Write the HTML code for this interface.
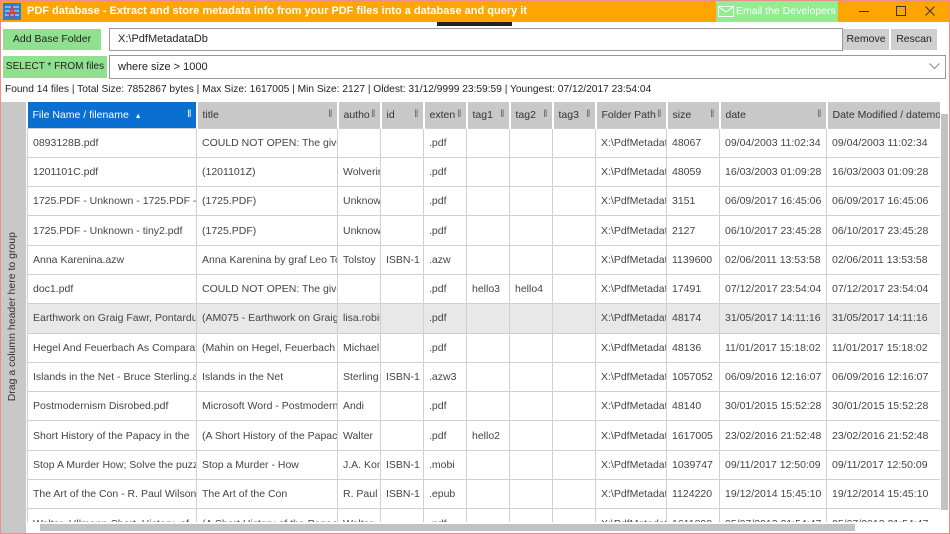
<!DOCTYPE html>
<html><head><style>
*{box-sizing:border-box;margin:0;padding:0}
html,body{width:950px;height:534px;overflow:hidden}
body{background:#fff;font-family:"Liberation Sans",sans-serif;font-size:10.5px;color:#222;position:relative}
.abs{position:absolute;white-space:nowrap}
#frame{left:0;top:0;width:950px;height:534px;border:1px solid #e89090;z-index:10;pointer-events:none}
#tb{left:0;top:0;width:950px;height:22px;background:#ffa500;color:#fff;font-weight:bold;font-size:11px;line-height:22px}
.btn{background:#8fe08f;color:#222;text-align:center;font-size:10.5px}
.gbtn{background:#cfcfcf;text-align:center;font-size:10.5px;line-height:21px}
.box{border:1px solid #999;background:#fff;font-size:11px;padding-left:8px}
table{border-collapse:collapse;table-layout:fixed;position:absolute;left:27px;top:102px;width:913px}
td{height:29.3px;border:1px solid #d0d0d0;padding:0 5px;white-space:nowrap;overflow:hidden;color:#444;font-size:10.5px}
th{height:26px;background:#c8c8c8;border-right:2px solid #fff;font-weight:normal;text-align:left;padding:0 5px;white-space:nowrap;overflow:hidden;color:#333;position:relative;font-size:10.5px}
th span.g{position:absolute;right:4px;top:6px;color:#666}
th.s{background:#0a6fd0;color:#fff}
th.s span.g{color:#fff}
tr.sel td{background:#e8e8e8}
</style></head><body>
<div id="tb" class="abs">
<svg class="abs" style="left:3px;top:3px" width="18" height="17"><rect width="18" height="17" fill="#2a7fd4"/><path d="M2 4h14M2 8h14M2 12h14" stroke="#8fd0ff" stroke-width="1.5"/><path d="M6 15 L9 3 L12 15 M4 11 L14 9" stroke="#e33" stroke-width="1.6" fill="none"/></svg>
<span class="abs" style="left:27px;top:0">PDF database - Extract and store metadata info from your PDF files into a database and query it</span>
<div class="abs" style="left:716px;top:0;width:122px;height:22px;background:#90ee90;font-weight:normal;font-size:10.5px;padding-left:20px;overflow:hidden">Email the Developers</div>
<svg class="abs" style="left:718px;top:6px" width="16" height="11"><rect x="0.5" y="0.5" width="15" height="10" fill="none" stroke="#fff"/><path d="M1 1l7 5 7-5" stroke="#fff" fill="none"/></svg>
<div class="abs" style="left:859px;top:11px;width:10px;height:1px;background:#333"></div>
<div class="abs" style="left:896px;top:6px;width:10px;height:10px;border:1px solid #333"></div>
<svg class="abs" style="left:925px;top:6px" width="10" height="10"><path d="M0.5 0.5l9 9M9.5 0.5l-9 9" stroke="#333"/></svg>
</div>
<div class="abs" style="left:437px;top:22px;width:75px;height:4px;background:#222"></div>
<div class="abs btn" style="left:3px;top:29px;width:98px;height:21px;line-height:21px">Add Base Folder</div>
<div class="abs box" style="left:109px;top:28px;width:734px;height:23px;line-height:21px">X:\PdfMetadataDb</div>
<div class="abs gbtn" style="left:843px;top:29px;width:46px;height:21px">Remove</div>
<div class="abs gbtn" style="left:891px;top:29px;width:46px;height:21px">Rescan</div>
<div class="abs btn" style="left:3px;top:56px;width:104px;height:22px;line-height:22px;font-size:10px">SELECT * FROM files</div>
<div class="abs box" style="left:109px;top:55px;width:837px;height:24px;line-height:22px">where size &gt; 1000</div>
<svg class="abs" style="left:929px;top:63px" width="11" height="7"><path d="M0.5 0.5l5 5 5-5" stroke="#888" fill="none"/></svg>
<div class="abs" style="left:5px;top:84px;font-size:10.2px;color:#222">Found 14 files | Total Size: 7852867 bytes | Max Size: 1617005 | Min Size: 2127 | Oldest: 31/12/9999 23:59:59 | Youngest: 07/12/2017 23:54:04</div>
<div class="abs" style="left:0;top:102px;width:26px;height:432px;background:#c8c8c8"></div>
<div class="abs" style="left:6px;top:232px;writing-mode:vertical-rl;transform:rotate(180deg);color:#333;font-size:10.5px">Drag a column header here to group</div>
<table>
<colgroup><col style="width:169px"><col style="width:141px"><col style="width:43px"><col style="width:43px"><col style="width:43px"><col style="width:43px"><col style="width:43px"><col style="width:43px"><col style="width:71px"><col style="width:53px"><col style="width:107px"><col style="width:114px"></colgroup>
<tr><th class="s">File Name / filename &nbsp;<span style="font-size:7px">▲</span><span class="g">‖</span></th><th>title<span class="g">‖</span></th><th>autho<span class="g">‖</span></th><th>id<span class="g">‖</span></th><th>exten<span class="g">‖</span></th><th>tag1<span class="g">‖</span></th><th>tag2<span class="g">‖</span></th><th>tag3<span class="g">‖</span></th><th>Folder Path<span class="g">‖</span></th><th>size<span class="g">‖</span></th><th>date<span class="g">‖</span></th><th style="border-right:0">Date Modified / datemod</th></tr>
<tr><td>0893128B.pdf</td><td>COULD NOT OPEN: The given</td><td></td><td></td><td>.pdf</td><td></td><td></td><td></td><td>X:\PdfMetadata</td><td>48067</td><td>09/04/2003 11:02:34</td><td>09/04/2003 11:02:34</td></tr>
<tr><td>1201101C.pdf</td><td>(1201101Z)</td><td>Wolverine</td><td></td><td>.pdf</td><td></td><td></td><td></td><td>X:\PdfMetadata</td><td>48059</td><td>16/03/2003 01:09:28</td><td>16/03/2003 01:09:28</td></tr>
<tr><td>1725.PDF - Unknown - 1725.PDF - </td><td>(1725.PDF)</td><td>Unknown</td><td></td><td>.pdf</td><td></td><td></td><td></td><td>X:\PdfMetadata</td><td>3151</td><td>06/09/2017 16:45:06</td><td>06/09/2017 16:45:06</td></tr>
<tr><td>1725.PDF - Unknown - tiny2.pdf</td><td>(1725.PDF)</td><td>Unknown</td><td></td><td>.pdf</td><td></td><td></td><td></td><td>X:\PdfMetadata</td><td>2127</td><td>06/10/2017 23:45:28</td><td>06/10/2017 23:45:28</td></tr>
<tr><td>Anna Karenina.azw</td><td>Anna Karenina by graf Leo Tolstoy</td><td>Tolstoy</td><td>ISBN-1</td><td>.azw</td><td></td><td></td><td></td><td>X:\PdfMetadata</td><td>1139600</td><td>02/06/2011 13:53:58</td><td>02/06/2011 13:53:58</td></tr>
<tr><td>doc1.pdf</td><td>COULD NOT OPEN: The given</td><td></td><td></td><td>.pdf</td><td>hello3</td><td>hello4</td><td></td><td>X:\PdfMetadata</td><td>17491</td><td>07/12/2017 23:54:04</td><td>07/12/2017 23:54:04</td></tr>
<tr class="sel"><td>Earthwork on Graig Fawr, Pontardulais</td><td>(AM075 - Earthwork on Graig</td><td>lisa.robinson</td><td></td><td>.pdf</td><td></td><td></td><td></td><td>X:\PdfMetadata</td><td>48174</td><td>31/05/2017 14:11:16</td><td>31/05/2017 14:11:16</td></tr>
<tr><td>Hegel And Feuerbach As Comparative</td><td>(Mahin on Hegel, Feuerbach</td><td>Michael</td><td></td><td>.pdf</td><td></td><td></td><td></td><td>X:\PdfMetadata</td><td>48136</td><td>11/01/2017 15:18:02</td><td>11/01/2017 15:18:02</td></tr>
<tr><td>Islands in the Net - Bruce Sterling.azw3</td><td>Islands in the Net</td><td>Sterling</td><td>ISBN-1</td><td>.azw3</td><td></td><td></td><td></td><td>X:\PdfMetadata</td><td>1057052</td><td>06/09/2016 12:16:07</td><td>06/09/2016 12:16:07</td></tr>
<tr><td>Postmodernism Disrobed.pdf</td><td>Microsoft Word - Postmodernism</td><td>Andi</td><td></td><td>.pdf</td><td></td><td></td><td></td><td>X:\PdfMetadata</td><td>48140</td><td>30/01/2015 15:52:28</td><td>30/01/2015 15:52:28</td></tr>
<tr><td>Short History of the Papacy in the</td><td>(A Short History of the Papacy</td><td>Walter</td><td></td><td>.pdf</td><td>hello2</td><td></td><td></td><td>X:\PdfMetadata</td><td>1617005</td><td>23/02/2016 21:52:48</td><td>23/02/2016 21:52:48</td></tr>
<tr><td>Stop A Murder How; Solve the puzzle</td><td>Stop a Murder - How</td><td>J.A. Konrath</td><td>ISBN-1</td><td>.mobi</td><td></td><td></td><td></td><td>X:\PdfMetadata</td><td>1039747</td><td>09/11/2017 12:50:09</td><td>09/11/2017 12:50:09</td></tr>
<tr><td>The Art of the Con - R. Paul Wilson</td><td>The Art of the Con</td><td>R. Paul</td><td>ISBN-1</td><td>.epub</td><td></td><td></td><td></td><td>X:\PdfMetadata</td><td>1124220</td><td>19/12/2014 15:45:10</td><td>19/12/2014 15:45:10</td></tr>
<tr><td>Walter_Ullmann-Short_History_of_</td><td>(A Short History of the Papacy</td><td>Walter</td><td></td><td>.pdf</td><td></td><td></td><td></td><td>X:\PdfMetadata</td><td>1611898</td><td>05/07/2012 21:54:47</td><td>05/07/2012 21:54:47</td></tr>
</table>
<div class="abs" style="left:940px;top:102px;width:10px;height:432px;background:#fff"></div>
<div class="abs" style="left:941px;top:114px;width:7px;height:396px;background:#c2c2c2"></div>
<div class="abs" style="left:27px;top:522px;width:913px;height:12px;background:#fff"></div>
<div class="abs" style="left:40px;top:524px;width:815px;height:7px;background:#c2c2c2"></div>
<div id="frame" class="abs"></div>
</body></html>
